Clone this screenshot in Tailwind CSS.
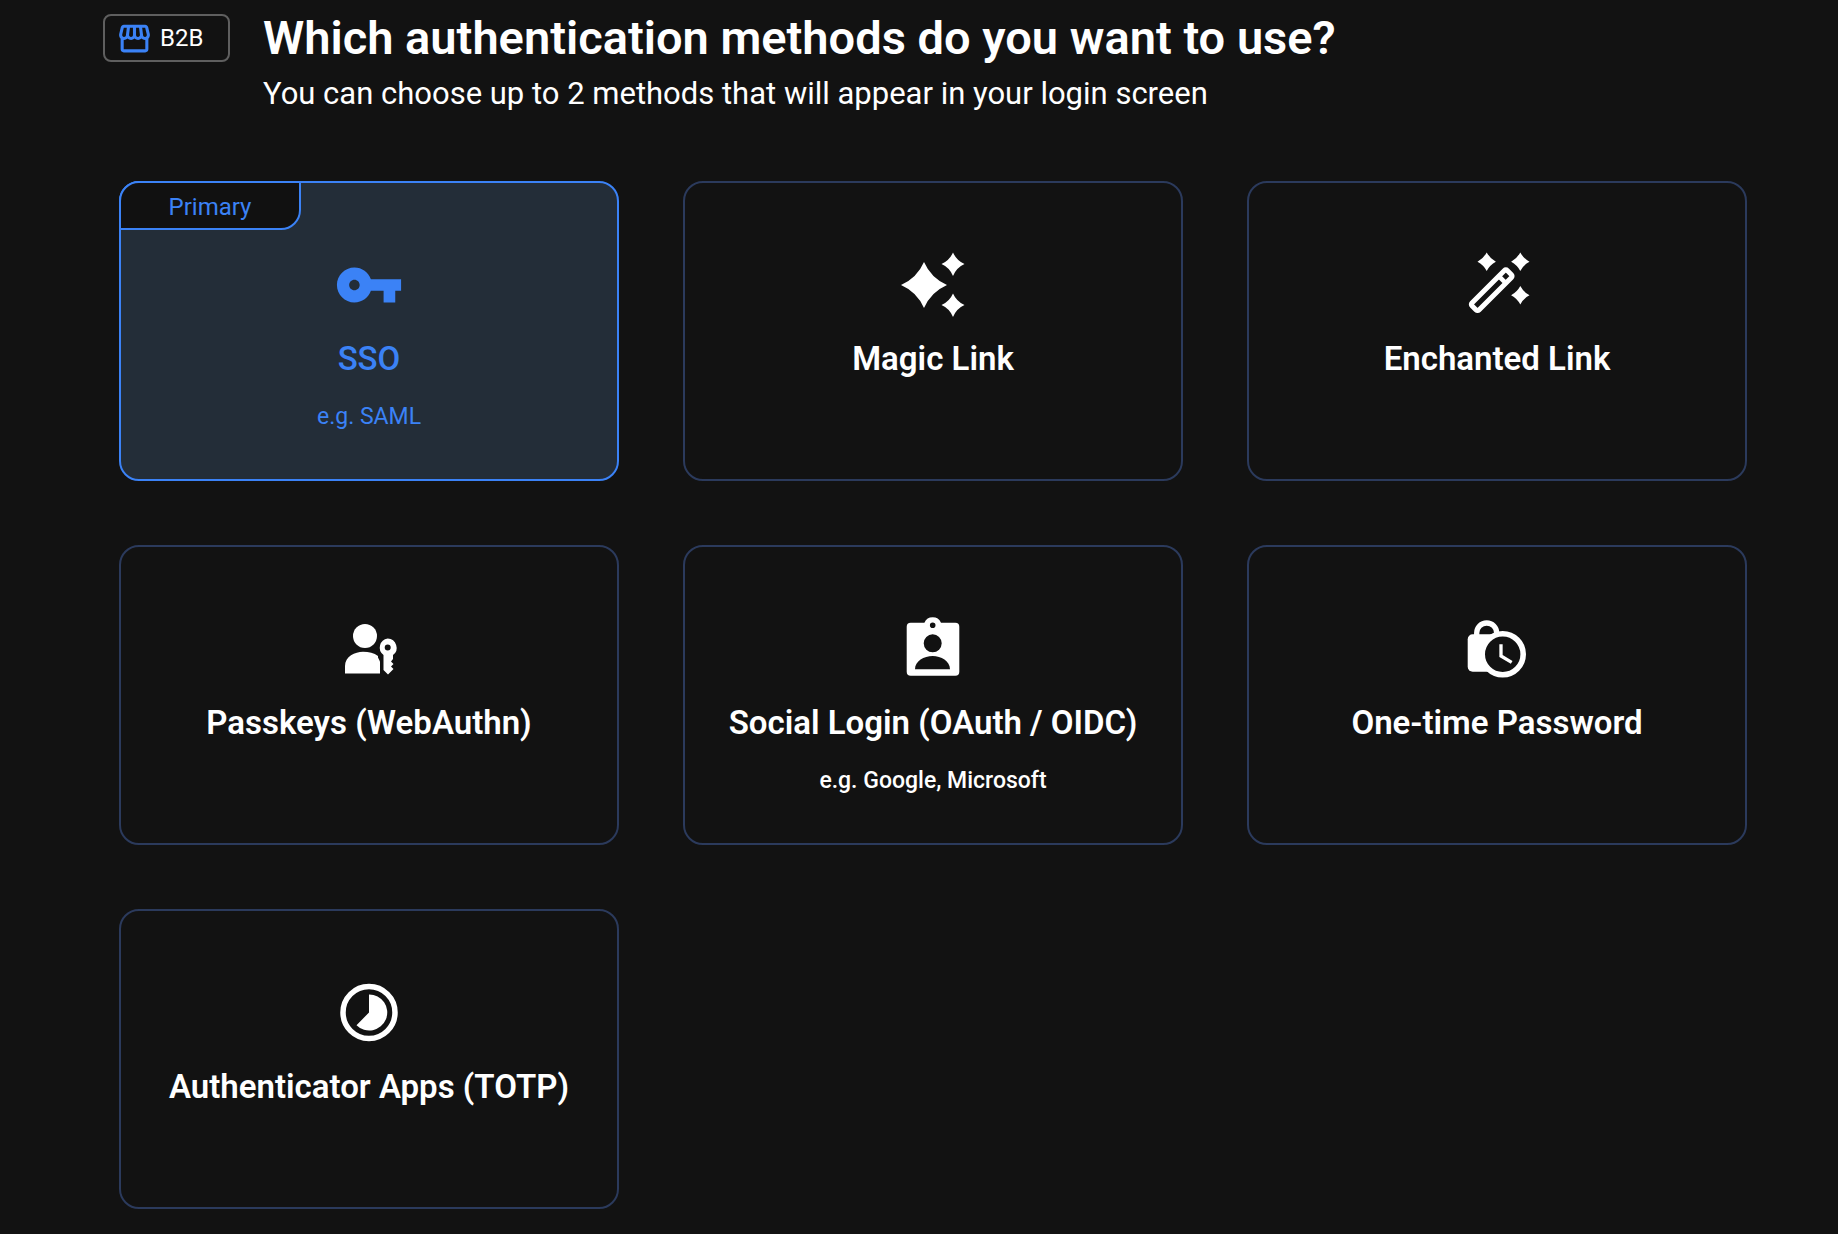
<!DOCTYPE html>
<html lang="en">
<head>
    <meta charset="UTF-8">
    <title>Authentication methods</title>
    <script src="https://cdn.jsdelivr.net/npm/@tailwindcss/browser@4"></script>
</head>
<body class="bg-[#121212] text-white font-['Roboto',sans-serif] antialiased">
    <div class="w-[1838px] h-[1234px] overflow-hidden">

        <!-- Header -->
        <div class="flex items-start pl-[103px] pt-[14px] gap-[33px]">
            <div class="flex items-center w-[127px] h-[48px] border-2 border-[#5f5f5f] rounded-lg pl-[11px] gap-[7px]">
                <svg class="w-[37px] h-[37px] fill-[#3b82f6]" viewBox="0 0 24 24"><path d="M21.9 8.89l-1.05-4.37c-.22-.9-1-1.52-1.91-1.52H5.05c-.9 0-1.69.63-1.9 1.52L2.1 8.89c-.24 1.02-.02 2.06.62 2.88.08.11.19.19.28.29V19c0 1.1.9 2 2 2h14c1.1 0 2-.9 2-2v-6.94c.09-.09.2-.18.28-.28.64-.82.87-1.87.62-2.89zm-2.99-3.9l1.05 4.37c.1.42.01.84-.25 1.17-.14.18-.44.47-.94.47-.61 0-1.14-.49-1.21-1.14L16.98 5l1.93-.01zM13 5h1.96l.54 4.52c.05.39-.07.78-.33 1.07-.22.26-.54.41-.95.41-.67 0-1.22-.59-1.22-1.31V5zM8.49 9.52L9.04 5H11v4.69c0 .72-.55 1.31-1.29 1.31-.34 0-.65-.15-.89-.41-.25-.29-.37-.68-.33-1.07zm-4.45-.16L5.05 5h1.97l-.58 4.86c-.08.65-.6 1.14-1.21 1.14-.49 0-.8-.29-.93-.47-.27-.32-.36-.75-.26-1.17zM5 19v-6.03c.08.01.15.03.23.03.87 0 1.66-.36 2.24-.95.6.6 1.4.95 2.31.95.87 0 1.65-.36 2.23-.93.59.57 1.39.93 2.29.93.84 0 1.64-.35 2.24-.95.58.59 1.37.95 2.24.95.08 0 .15-.02.23-.03V19H5z"/></svg>
                <span class="text-[24px] leading-none">B2B</span>
            </div>
            <div>
                <h1 class="text-[47px] leading-[48px] font-semibold">Which authentication methods do you want to use?</h1>
                <p class="text-[31px] leading-[36px] mt-[14px]">You can choose up to 2 methods that will appear in your login screen</p>
            </div>
        </div>

        <!-- Method cards -->
        <div class="grid grid-cols-[repeat(3,500px)] auto-rows-[300px] gap-[64px] ml-[119px] mt-[69px]">

            <div class="relative flex flex-col items-center pt-[66px] rounded-[20px] border-2 border-[#3b82f6] bg-[#232d38] text-[#3b82f6]">
                <div class="absolute left-[-2px] top-[-2px] w-[182px] h-[49px] pt-[2px] flex items-center justify-center border-2 border-[#3b82f6] rounded-tl-[20px] rounded-br-[20px] bg-[#111111] text-[24px]">Primary</div>
                <svg class="w-[70px] h-[70px] my-px fill-[#3b82f6]" viewBox="0 0 24 24"><path d="M12.65 10C11.83 7.67 9.61 6 7 6c-3.31 0-6 2.69-6 6s2.69 6 6 6c2.61 0 4.83-1.67 5.65-4H17v4h4v-4h2v-4H12.65zM7 13.800c-1 0-1.800-.8-1.800-1.800s.8-1.800 1.800-1.800 1.800.8 1.800 1.800-.8 1.800-1.800 1.800z"/></svg>
                <div class="text-[33px] leading-[40px] font-medium mt-[18px]">SSO</div>
                <div class="text-[23px] leading-[30px] mt-[23px]">e.g. SAML</div>
            </div>

            <div class="flex flex-col items-center pt-[66px] rounded-[20px] border-2 border-[#2b3a5c]">
                <svg class="w-[72px] h-[72px] fill-white" viewBox="0 0 72 72">
                    <path d="M27 13Q34 29 50 36Q34 43 27 59Q20 43 4 36Q20 29 27 13Z"/>
                    <path d="M56 3.500Q59.500 11.500 67.500 15Q59.500 18.500 56 27Q52.500 18.500 44.500 15Q52.500 11.500 56 3.500Z"/>
                    <path d="M56 44.500Q59.500 52.500 67.500 56Q59.500 59.500 56 68Q52.500 59.500 44.500 56Q52.500 52.500 56 44.500Z"/>
                </svg>
                <div class="text-[33px] leading-[40px] font-semibold mt-[18px]">Magic Link</div>
            </div>

            <div class="flex flex-col items-center pt-[66px] rounded-[20px] border-2 border-[#2b3a5c]">
                <svg class="w-[72px] h-[72px] fill-white" viewBox="0 0 72 72">
                    <path d="M25.700 3.500Q28.900 9.500 34.900 12.700Q28.900 15.900 25.700 21.900Q22.500 15.900 16.500 12.700Q22.500 9.500 25.700 3.500Z"/>
                    <path d="M59.300 3.500Q62.500 9.500 68.500 12.700Q62.500 15.900 59.300 21.900Q56.100 15.900 50.100 12.700Q56.100 9.500 59.300 3.500Z"/>
                    <path d="M59.300 37.100Q62.500 43.100 68.500 46.300Q62.500 49.500 59.300 55.500Q56.100 49.500 50.100 46.300Q56.100 43.100 59.300 37.100Z"/>
                    <g transform="translate(30.700 41.200) rotate(-45)" class="fill-none stroke-white">
                        <rect x="-25" y="-5" width="50" height="10" rx="2" stroke-width="5"/>
                        <line x1="15" x2="15" y1="-5" y2="5" stroke-width="4.500"/>
                    </g>
                </svg>
                <div class="text-[33px] leading-[40px] font-semibold mt-[18px]">Enchanted Link</div>
            </div>

            <div class="flex flex-col items-center pt-[66px] rounded-[20px] border-2 border-[#2b3a5c]">
                <svg class="w-[72px] h-[72px] fill-white" viewBox="0 0 72 72">
                    <circle cx="32" cy="23" r="12"/>
                    <path d="M12 60.500V53C12 43.500 22 38.700 30 38.700C36 38.700 41 40 45 43V44.500C46 47 47 48 47 49V60.500Z"/>
                    <path fill-rule="evenodd" d="M54.700 25.500A9.200 9.200 0 0 1 60 42V46L58 48.500L60.500 51L58 53.500L60.500 56L55 61.500L50.500 57V42A9.200 9.200 0 0 1 54.700 25.500ZM54.700 31.500A3 3 0 1 0 54.700 37.500A3 3 0 1 0 54.700 31.500Z"/>
                </svg>
                <div class="text-[33px] leading-[40px] font-semibold mt-[18px]">Passkeys (WebAuthn)</div>
            </div>

            <div class="flex flex-col items-center pt-[66px] rounded-[20px] border-2 border-[#2b3a5c]">
                <svg class="w-[72px] h-[72px] fill-white" viewBox="0 0 72 72">
                    <path fill-rule="evenodd" d="M13.700 9.700H27.400A9.100 9.100 0 0 1 44 9.700H58.300A4 4 0 0 1 62.300 13.700V58.700A4 4 0 0 1 58.300 62.700H13.700A4 4 0 0 1 9.700 58.700V13.700A4 4 0 0 1 13.700 9.700ZM35.700 9.500A2.800 2.800 0 1 0 35.700 15.100A2.800 2.800 0 1 0 35.700 9.500ZM35.700 21.300A9 9 0 1 0 35.700 39.300A9 9 0 1 0 35.700 21.300ZM18 56.300H53C53 48 44 43 35.700 43C27 43 18 48 18 56.300Z"/>
                </svg>
                <div class="text-[33px] leading-[40px] font-semibold mt-[18px]">Social Login (OAuth / OIDC)</div>
                <div class="text-[23px] leading-[30px] font-medium mt-[23px]">e.g. Google, Microsoft</div>
            </div>

            <div class="flex flex-col items-center pt-[66px] rounded-[20px] border-2 border-[#2b3a5c]">
                <svg class="w-[72px] h-[72px] fill-white" viewBox="0 0 72 72">
                    <path d="M15.700 24V20A10 10 0 0 1 35.700 20V24" class="fill-none stroke-white" stroke-width="5.300"/>
                    <rect x="6.700" y="21.300" width="36" height="37.400" rx="5"/>
                    <circle cx="41.700" cy="41.300" r="20.500" stroke-width="5.600" class="fill-[#121212] stroke-white"/>
                    <path d="M40 31.300V43L50.700 49.300" class="fill-none stroke-white" stroke-width="3.300"/>
                </svg>
                <div class="text-[33px] leading-[40px] font-semibold mt-[18px]">One-time Password</div>
            </div>

            <div class="flex flex-col items-center pt-[66px] rounded-[20px] border-2 border-[#2b3a5c]">
                <svg class="w-[72px] h-[72px] fill-white" viewBox="0 0 72 72">
                    <circle cx="36" cy="35.500" r="26" stroke-width="5.500" class="fill-none stroke-white"/>
                    <path d="M36 35.500V17.500A18 18 0 1 1 23.500 48.200Z"/>
                </svg>
                <div class="text-[33px] leading-[40px] font-semibold mt-[18px]">Authenticator Apps (TOTP)</div>
            </div>

        </div>
    </div>
</body>
</html>
